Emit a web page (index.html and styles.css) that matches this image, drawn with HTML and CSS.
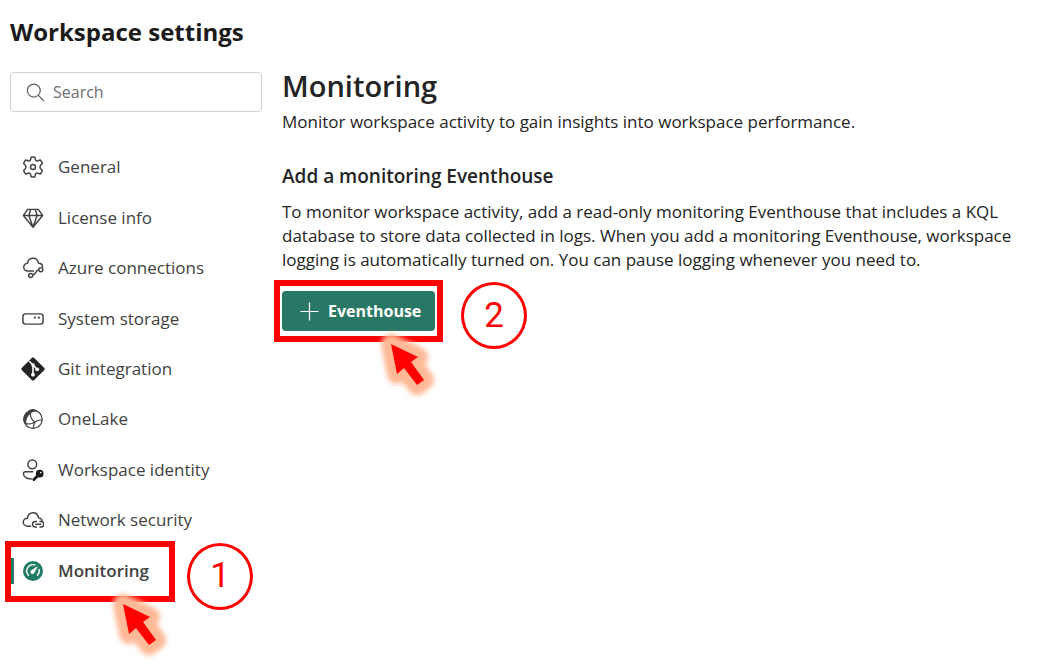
FILE: index.html
```html
<!DOCTYPE html>
<html lang="en">
<head>
<meta charset="utf-8">
<meta name="viewport" content="width=device-width, initial-scale=1">
<title>Workspace settings</title>
<link rel="stylesheet" href="styles.css">
</head>
<body>
<svg class="defs" aria-hidden="true">
  <defs>
    <filter id="soft" x="-80%" y="-80%" width="260%" height="260%"><feGaussianBlur stdDeviation="2.8"/></filter>
    <g id="pointer">
      <path d="M14 14 41 27 34 32 47 50 40 55 27 38 20 44Z" fill="#ffb996" stroke="#ffb996" stroke-width="20" stroke-linejoin="round" filter="url(#soft)"/>
      <path d="M14 14 41 27 34 32 47 50 40 55 27 38 20 44Z" fill="#f00"/>
    </g>
  </defs>
</svg>
<h1 class="page-title">Workspace settings</h1>
<div class="layout">
  <aside class="sidebar">
    <label class="search">
      <svg class="search-icon" viewBox="0 0 20 20" aria-hidden="true"><circle cx="8.2" cy="8" r="6.8"/><path d="M13 13l6 6"/></svg>
      <input class="search-input" type="search" placeholder="Search" aria-label="Search">
    </label>
    <nav class="nav" aria-label="Workspace settings">
      <a class="nav-item" href="#general">
        <svg class="icon" viewBox="0 0 24 24" aria-hidden="true"><circle cx="12" cy="12" r="2.7"/><path d="M9.900 1.400a10 10 0 0 1 4.200 0l.5 2.500q.7 2 2.800 1.300l2.600-.8a11 11 0 0 1 2.200 3.800l-1.900 1.800q-1.500 2 0 4l1.900 1.800a11 11 0 0 1-2.200 3.800l-2.600-.8q-2.100-.7-2.800 1.300l-.5 2.500a10 10 0 0 1-4.200 0l-.5-2.500q-.7-2-2.800-1.300l-2.600.8a11 11 0 0 1-2.200-3.800L3.700 14q1.500-2 0-4L1.800 8.200A11 11 0 0 1 4 4.400l2.600.8q2.100.7 2.800-1.300z"/></svg>
        <span>General</span></a>
      <a class="nav-item" href="#license">
        <svg class="icon" viewBox="0 0 24 24" aria-hidden="true"><path d="M6.200 2.600h11.600l4.700 6.600L12 22 1.500 9.200zM1.500 9.200h21M9.500 2.600 7.500 9.200 12 22l4.500-12.800-2-6.600"/></svg>
        <span>License info</span></a>
      <a class="nav-item" href="#azure">
        <svg class="icon" viewBox="0 0 24 24" aria-hidden="true"><path d="M12.500 15.300H6.300a4.200 4.200 0 0 1-.3-8.500C6.500 3.200 9 1.300 12 1.300s5.500 1.900 6 5.500c2.600 0 4.400 1.800 4.400 4M11.800 19.300c4 0 2.500-5 6.200-5"/><circle cx="20.500" cy="13.800" r="2.200"/><circle cx="9.500" cy="20.200" r="2.200"/></svg>
        <span>Azure connections</span></a>
      <a class="nav-item" href="#storage">
        <svg class="icon" viewBox="0 0 24 24" aria-hidden="true"><rect x="1" y="6.400" width="22" height="11.200" rx="2.800"/><path d="M14 10.500h.1M18.300 10.500h.1" stroke-width="2.200"/></svg>
        <span>System storage</span></a>
      <a class="nav-item" href="#git">
        <svg class="icon icon-git" viewBox="0 0 26 26" aria-hidden="true"><rect x="4.300" y="4.300" width="17.400" height="17.400" rx="1.400" transform="rotate(45 13 13)" fill="#242424" stroke="none"/><path d="M9.500 5.500 13 9v9.500M13 9l4 4.300" stroke="#fff"/><g fill="#fff" stroke="none"><circle cx="13" cy="9" r="1.700"/><circle cx="13" cy="18.700" r="1.900"/><circle cx="17.200" cy="13.300" r="1.900"/></g></svg>
        <span>Git integration</span></a>
      <a class="nav-item" href="#onelake">
        <svg class="icon" viewBox="0 0 24 24" aria-hidden="true"><circle cx="12" cy="12.300" r="10" stroke-width="1.300"/><path d="M6.500 4C7.500.5 15.500 0 17 4c-3-.8-6 0-8 2.500C5.500 9.500 4 13 5 18.500.5 15.500 0 9.500 4.200 6z" fill="#424242" stroke="none"/><path d="M9 5.500c.1 4 2 8 5.200 9.800M5 17c3 1 6.500 0 9-1.700s5-2.800 8-2M14.200 15.300c-1 1.600-1.600 4.200-1.700 6.700" stroke-width="1.300"/></svg>
        <span>OneLake</span></a>
      <a class="nav-item" href="#identity">
        <svg class="icon" viewBox="0 0 24 24" aria-hidden="true"><circle cx="11.200" cy="5.800" r="4.800"/><path d="M11.800 14H3.800C2.400 14 1.600 14.800 1.600 16c0 3.800 3.500 6 9 5.700"/><path d="m13 22.300 6-6" stroke="#1b1b1b" stroke-width="3.200"/><circle cx="19.300" cy="16" r="4.200" fill="#1b1b1b" stroke="none"/><circle cx="20.500" cy="14.800" r=".9" fill="#fff" stroke="none"/></svg>
        <span>Workspace identity</span></a>
      <a class="nav-item" href="#network">
        <svg class="icon" viewBox="0 0 24 24" aria-hidden="true"><path d="M9.500 18.700H5.500a4.300 4.300 0 0 1 .4-8.600C6.500 6.200 8.800 4.200 12 4.200c3 0 5.300 1.900 6 5.300 1.800.2 3.300 1.200 3.900 2.800M15.800 13.700h-1.300a3 3 0 0 0 0 6h1.300M19.600 13.700h1.200a3 3 0 0 1 0 6h-1.200M15 16.700h5.500"/></svg>
        <span>Network security</span></a>
      <a class="nav-item is-active" href="#monitoring" aria-current="page">
        <svg class="icon" viewBox="0 0 24 24" aria-hidden="true"><circle cx="12" cy="12" r="10.900" fill="#217a64" stroke="none"/><path d="M7.200 16.700A6.800 6.800 0 0 1 14 5.400M18.700 10.300a6.800 6.800 0 0 1-1.900 6.400" stroke="#fff" stroke-width="1.500"/><path d="M17.500 6.500 10.600 11a2.300 2.300 0 1 0 3 3z" fill="#fff" stroke="none"/></svg>
        <span>Monitoring</span>
        <span class="marker marker-nav"></span>
        <span class="step step-nav">1</span>
        <svg class="pointer pointer-nav" viewBox="0 0 64 70" aria-hidden="true"><use href="#pointer"/></svg>
      </a>
    </nav>
  </aside>
  <main class="content">
    <h2 class="section-title">Monitoring</h2>
    <p class="text">Monitor workspace activity to gain insights into workspace performance.</p>
    <h3 class="subtitle">Add a monitoring Eventhouse</h3>
    <p class="text">To monitor workspace activity, add a read-only monitoring Eventhouse that includes a KQL database to store data collected in logs. When you add a monitoring Eventhouse, workspace logging is automatically turned on. You can pause logging whenever you need to.</p>
    <div class="action">
      <button class="button" type="button">
        <svg class="plus" viewBox="0 0 20 20" aria-hidden="true"><path d="M10 .5v19M.5 10h19"/></svg>
        <span>Eventhouse</span>
      </button>
      <span class="marker marker-action"></span>
      <span class="step step-action">2</span>
      <svg class="pointer pointer-action" viewBox="0 0 64 70" aria-hidden="true"><use href="#pointer"/></svg>
    </div>
  </main>
</div>
</body>
</html>
```
FILE: styles.css
```css
* { box-sizing: border-box; }

body {
  min-height: 100vh;
  margin: 0;
  padding: 12px 10px 60px;
  background: #fff;
  color: #242424;
  font-family: "Open Sans", "Noto Sans", sans-serif;
  font-size: 17px;
  line-height: 24px;
}

.defs { position: absolute; width: 0; height: 0; }

h1, h2, h3, p { margin: 0; }

.page-title {
  font-size: 24px;
  line-height: 40px;
  font-weight: 700;
  color: #1b1b1b;
}

.layout {
  display: grid;
  grid-template-columns: 252px minmax(0, 1fr);
  gap: 20px;
  margin-top: 20px;
}

.search {
  display: flex;
  align-items: center;
  gap: 8px;
  height: 40px;
  padding: 0 14px 0 15px;
  border: 1px solid #d1d1d1;
  border-radius: 4px;
}

.search-icon {
  flex: none;
  width: 19px;
  height: 19px;
  fill: none;
  stroke: #616161;
  stroke-width: 1.3;
}

.search-input {
  flex: 1;
  min-width: 0;
  padding: 0;
  border: 0;
  outline: 0;
  background: none;
  color: #242424;
  font: inherit;
  font-size: 16px;
}

.search-input::placeholder { color: #707070; opacity: 1; }

.nav {
  display: grid;
  grid-auto-rows: 1fr;
  height: 454px;
  margin-top: 30px;
}

.nav-item {
  position: relative;
  display: flex;
  align-items: center;
  gap: 14px;
  padding-left: 12px;
  color: #424242;
  text-decoration: none;
}

.icon {
  flex: none;
  width: 22px;
  height: 22px;
  fill: none;
  stroke: #424242;
  stroke-width: 1.6;
  stroke-linecap: round;
  stroke-linejoin: round;
}

.icon-git { width: 26px; height: 26px; margin: 0 -2px; }

.is-active { font-weight: 600; }

.is-active::before {
  content: "";
  position: absolute;
  left: 0;
  width: 4px;
  height: 26px;
  background: #217a64;
}

.section-title {
  margin: -4px 0 6px;
  font-size: 29px;
  line-height: 36px;
  font-weight: 600;
}

.text { max-width: 740px; }

.subtitle {
  margin: 30px 0 12px;
  font-size: 19px;
  line-height: 24px;
  font-weight: 600;
}

.action {
  position: relative;
  width: max-content;
  margin-top: 19px;
}

.button {
  display: flex;
  align-items: center;
  gap: 9px;
  height: 40px;
  padding: 0 14px 0 18px;
  border: 0;
  border-radius: 4px;
  background: #297866;
  color: #fff;
  font: inherit;
  font-size: 16px;
  font-weight: 700;
}

.plus {
  width: 19px;
  height: 19px;
  fill: none;
  stroke: #fff;
  stroke-width: 1.3;
}

.marker {
  position: absolute;
  border: 6px solid #f00;
}

.marker-nav { left: -5px; width: 170px; top: -5px; bottom: -6px; }
.marker-action { inset: -11px -8px; }

.step {
  position: absolute;
  display: flex;
  align-items: center;
  justify-content: center;
  width: 66px;
  height: 67px;
  border: 3px solid #f00;
  border-radius: 50%;
  color: #f00;
  font-family: Roboto, "Open Sans", sans-serif;
  font-size: 35px;
  font-weight: 400;
}

.step-nav { left: 177px; top: -3px; }
.step-action { left: 179px; top: -9px; }

.pointer {
  position: absolute;
  width: 64px;
  height: 70px;
  overflow: visible;
}

.pointer-nav { left: 99px; top: 44px; }
.pointer-action { left: 95px; top: 39px; }
```
